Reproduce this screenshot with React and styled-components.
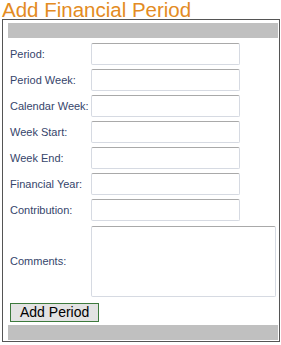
import React from "react";
import styled, { createGlobalStyle } from "styled-components";

const fields = [
  "Period:",
  "Period Week:",
  "Calendar Week:",
  "Week Start:",
  "Week End:",
  "Financial Year:",
  "Contribution:",
];

const GlobalStyle = createGlobalStyle`
  body {
    margin: 0;
    background: #fff;
    font-family: "Liberation Sans", Arial, sans-serif;
  }
`;

const Page = styled.div`
  width: 281px;
  height: 345px;
  overflow: hidden;
`;

const Title = styled.h2`
  margin: 0;
  padding: 0 0 0 2px;
  height: 19px;
  font-size: 20.5px;
  line-height: 20px;
  font-weight: normal;
  color: #e38b22;
`;

const Panel = styled.div`
  box-sizing: border-box;
  margin-left: 2px;
  width: 278px;
  border: 1px solid #555;
  padding: 3px 1px 1px 5px;
`;

const GreyBar = styled.div`
  height: 15px;
  background: #c0c0c0;
`;

const Form = styled.div`
  display: grid;
  grid-template-columns: 83px auto;
  row-gap: 4px;
  align-items: center;
  padding: 5px 0 6px;
`;

const Label = styled.label`
  padding-left: 2px;
  font-size: 11px;
  white-space: nowrap;
  color: #35456b;
`;

const Input = styled.input`
  box-sizing: border-box;
  width: 149px;
  height: 22px;
  margin: 0;
  border: 1px solid #d6dae2;
  border-top-color: #a9a9a9;
  border-radius: 2px;
  background: #fff;
`;

const TextArea = styled.textarea`
  box-sizing: border-box;
  display: block;
  width: 185px;
  height: 71px;
  margin: 1px 0 0;
  border: 1px solid #d6dae2;
  border-top-color: #a9a9a9;
  border-radius: 2px;
  resize: none;
`;

const Button = styled.button`
  display: block;
  margin: 0 0 3px 2px;
  padding: 0 9px;
  height: 19px;
  font-family: "Liberation Sans", Arial, sans-serif;
  font-size: 14px;
  line-height: 17px;
  color: #000;
  background: #e3e3e3;
  border: 1px solid #3d7a3d;
`;

export default function App() {
  return (
    <Page>
      <GlobalStyle />
      <Title>Add Financial Period</Title>
      <Panel>
        <GreyBar />
        <Form>
          {fields.map((f) => (
            <React.Fragment key={f}>
              <Label>{f}</Label>
              <Input type="text" />
            </React.Fragment>
          ))}
          <Label>Comments:</Label>
          <TextArea />
        </Form>
        <Button>Add Period</Button>
        <GreyBar />
      </Panel>
    </Page>
  );
}
